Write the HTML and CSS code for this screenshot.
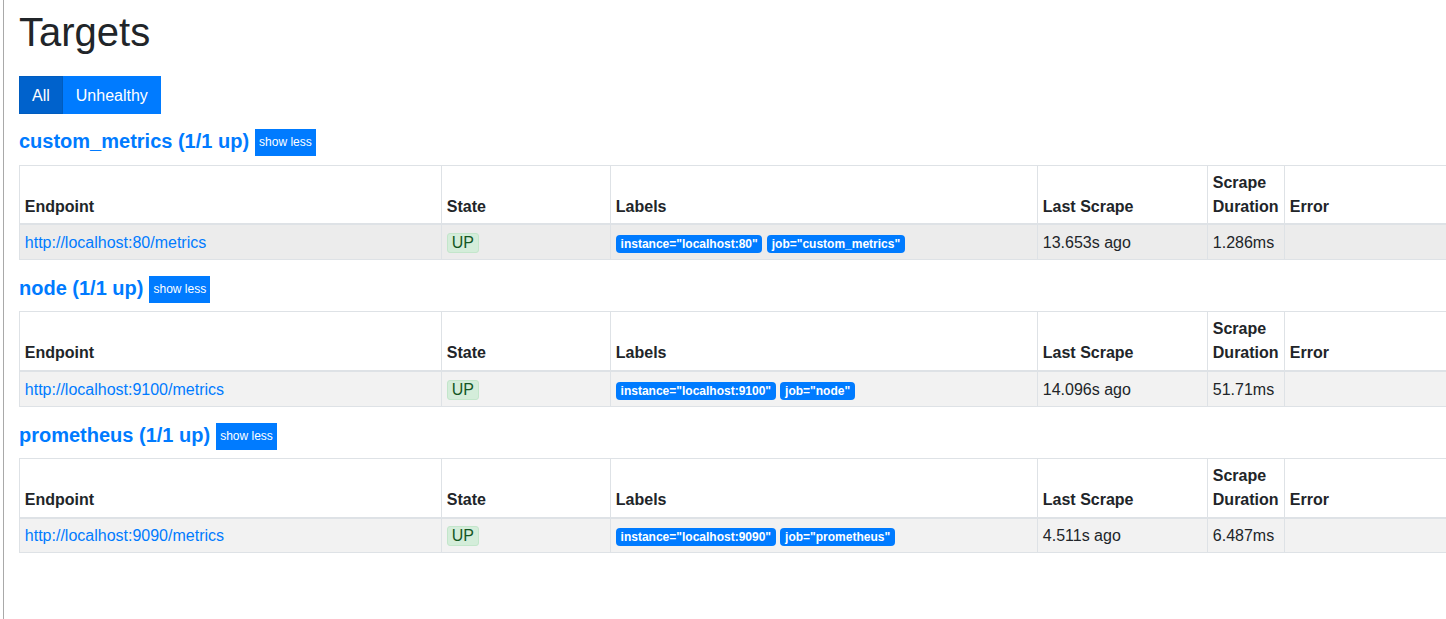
FILE: index.html
```html
<!DOCTYPE html>
<html lang="en">
<head>
<meta charset="utf-8">
<title>Targets</title>
<link rel="stylesheet" href="styles.css">
</head>
<body>
<div class="page">
  <h1 class="title">Targets</h1>
  <div class="btn-group">
    <button class="btn btn-active">All</button><button class="btn">Unhealthy</button>
  </div>

  <section class="pool">
    <h3 class="pool-head"><a href="#" class="pool-name">custom_metrics (1/1 up)</a><button class="btn-xs">show less</button></h3>
    <table class="targets">
      <colgroup><col class="c-endpoint"><col class="c-state"><col class="c-labels"><col class="c-last"><col class="c-dur"><col class="c-error"></colgroup>
      <thead>
        <tr><th>Endpoint</th><th>State</th><th>Labels</th><th>Last Scrape</th><th>Scrape Duration</th><th>Error</th></tr>
      </thead>
      <tbody>
        <tr class="row hovered">
          <td><a href="#" class="endpoint">http://localhost:80/metrics</a></td>
          <td><span class="state-up">UP</span></td>
          <td><span class="badge">instance="localhost:80"</span> <span class="badge">job="custom_metrics"</span></td>
          <td>13.653s ago</td>
          <td>1.286ms</td>
          <td></td>
        </tr>
      </tbody>
    </table>
  </section>

  <section class="pool">
    <h3 class="pool-head"><a href="#" class="pool-name">node (1/1 up)</a><button class="btn-xs">show less</button></h3>
    <table class="targets">
      <colgroup><col class="c-endpoint"><col class="c-state"><col class="c-labels"><col class="c-last"><col class="c-dur"><col class="c-error"></colgroup>
      <thead>
        <tr><th>Endpoint</th><th>State</th><th>Labels</th><th>Last Scrape</th><th>Scrape Duration</th><th>Error</th></tr>
      </thead>
      <tbody>
        <tr class="row">
          <td><a href="#" class="endpoint">http://localhost:9100/metrics</a></td>
          <td><span class="state-up">UP</span></td>
          <td><span class="badge">instance="localhost:9100"</span> <span class="badge">job="node"</span></td>
          <td>14.096s ago</td>
          <td>51.71ms</td>
          <td></td>
        </tr>
      </tbody>
    </table>
  </section>

  <section class="pool">
    <h3 class="pool-head"><a href="#" class="pool-name">prometheus (1/1 up)</a><button class="btn-xs">show less</button></h3>
    <table class="targets">
      <colgroup><col class="c-endpoint"><col class="c-state"><col class="c-labels"><col class="c-last"><col class="c-dur"><col class="c-error"></colgroup>
      <thead>
        <tr><th>Endpoint</th><th>State</th><th>Labels</th><th>Last Scrape</th><th>Scrape Duration</th><th>Error</th></tr>
      </thead>
      <tbody>
        <tr class="row">
          <td><a href="#" class="endpoint">http://localhost:9090/metrics</a></td>
          <td><span class="state-up">UP</span></td>
          <td><span class="badge">instance="localhost:9090"</span> <span class="badge">job="prometheus"</span></td>
          <td>4.511s ago</td>
          <td>6.487ms</td>
          <td></td>
        </tr>
      </tbody>
    </table>
  </section>
</div>
</body>
</html>
```

FILE: styles.css
```css
html, body {
  margin: 0;
  padding: 0;
  overflow: hidden;
  background: #fff;
}
body {
  font-family: "Liberation Sans", Arial, sans-serif;
  font-size: 16px;
  line-height: 1.5;
  color: #212529;
}
.page {
  margin-left: 3px;
  border-left: 1px solid #a9a9a9;
  min-height: 619px;
  padding: 8px 0 0 15px;
  box-sizing: border-box;
}
.title {
  margin: 0 0 20px 0;
  font-size: 40px;
  font-weight: 500;
  line-height: 48px;
}
.btn-group {
  display: flex;
}
.btn {
  font-family: inherit;
  font-size: 16px;
  line-height: 24px;
  padding: 6.5px 12px 5.5px;
  border: 1px solid #007bff;
  background: #007bff;
  color: #fff;
  border-radius: 0;
  margin: 0;
}
.btn-active {
  background: #0062cc;
  border-color: #005cbf;
}
.pool {
  margin-top: 16px;
}
.pool:first-of-type {
  margin-top: 15px;
}
.pool-head {
  display: flex;
  align-items: flex-start;
  gap: 6px;
  margin: 0;
  height: 27px;
}
.pool-name {
  font-size: 20px;
  font-weight: 700;
  color: #007bff;
  text-decoration: none;
  line-height: 24px;
}
.btn-xs {
  font-family: inherit;
  font-size: 12px;
  line-height: 17px;
  padding: 4px 3px;
  border: 1px solid #007bff;
  background: #007bff;
  color: #fff;
  border-radius: 0;
  font-weight: 400;
}
.targets {
  margin-top: 8.6px;
  border-collapse: collapse;
  table-layout: fixed;
  width: 1700px;
  border: 1px solid #dee2e6;
}
.c-endpoint { width: 422px; }
.c-state { width: 169px; }
.c-labels { width: 427px; }
.c-last { width: 170px; }
.c-dur { width: 77px; }
.targets th,
.targets td {
  padding: 5px 4.8px 4.6px;
  border: 1px solid #dee2e6;
  text-align: left;
}
.targets td {
  padding-top: 5.6px;
  padding-bottom: 4px;
}
.targets th {
  vertical-align: bottom;
  font-weight: 700;
  border-bottom-width: 2px;
}
.targets td {
  vertical-align: top;
}
.row {
  background: rgba(0, 0, 0, 0.05);
}
.row.hovered {
  background: rgba(0, 0, 0, 0.075);
}
.endpoint {
  color: #007bff;
  text-decoration: none;
}
.state-up {
  display: inline-block;
  font-size: 16px;
  line-height: 16px;
  padding: 1px 4px;
  background: #d4edda;
  border: 1px solid #c3e6cb;
  color: #155724;
  border-radius: 3px;
}
.badge {
  display: inline-block;
  font-size: 12px;
  font-weight: 700;
  line-height: 1;
  padding: 3px 4.8px;
  background: #007bff;
  color: #fff;
  border-radius: 4px;
  white-space: nowrap;
  vertical-align: baseline;
}
```
